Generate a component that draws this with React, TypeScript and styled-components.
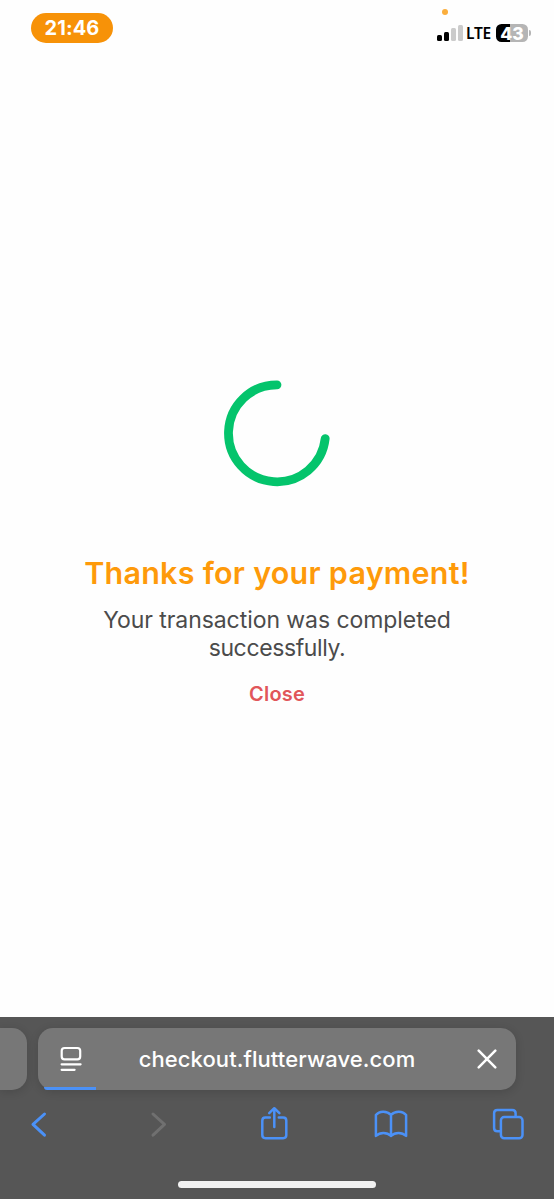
import { useState } from 'react';
import styled, { createGlobalStyle } from 'styled-components';

const BLUE = '#4b91f7';

export default function App() {
	const [closed, setClosed] = useState<boolean>(false);

	return (
		<>
			<GlobalStyle />
			<Screen>
				<StatusBar>
					<TimePill>21:46</TimePill>
					<StatusIcons>
						<MicDot />
						<Signal>
							<SignalBar $height={6} $active />
							<SignalBar $height={9} $active />
							<SignalBar $height={13} />
							<SignalBar $height={16} />
						</Signal>
						<Network>LTE</Network>
						<Battery>43</Battery>
						<BatteryTip />
					</StatusIcons>
				</StatusBar>

				<Content>
					{!closed && (
						<>
							<Spinner viewBox="0 0 108 108">
								<path d="M54 5.8A48.5 48.5 0 1 0 102.2 59.6" />
							</Spinner>
							<Title>Thanks for your payment!</Title>
							<Message>
								<span>Your transaction was completed</span>
								<br />
								<Ending>successfully.</Ending>
							</Message>
							<CloseButton
								type="button"
								onClick={() => setClosed(true)}
							>
								Close
							</CloseButton>
						</>
					)}
				</Content>

				<BrowserBar>
					<Tabs>
						<PreviousTab />
						<AddressBar>
							<PageIcon viewBox="0 0 24 28">
								<rect x="2.7" y="3" width="18.5" height="11.4" rx="2.8" />
								<path d="M2.6 19.3h19M2.6 24.8h13" />
							</PageIcon>
							<Url>checkout.flutterwave.com</Url>
							<StopIcon viewBox="0 0 20 20">
								<path d="M1.7 1.7l16.6 16.6M18.3 1.7L1.7 18.3" />
							</StopIcon>
							<Progress />
						</AddressBar>
					</Tabs>

					<Toolbar>
						<ToolIcon viewBox="0 0 36 36" $weight={3}>
							<path d="M23.5 8L12 18.4l11.5 10.8" />
						</ToolIcon>
						<ToolIcon viewBox="0 0 36 36" $weight={3} $disabled>
							<path d="M15 8l11.5 10.4L15 29.2" />
						</ToolIcon>
						<ToolIcon viewBox="0 0 36 36">
							<path d="M13.8 11.6H9.4q-3.1 0-3.1 3.1v14.4q0 3.1 3.1 3.1h17.8q3.1 0 3.1-3.1V14.7q0-3.1-3.1-3.1h-4.4M18.3 20.9V2.8M13.2 7.2l5.1-5 5.1 5" />
						</ToolIcon>
						<ToolIcon viewBox="0 0 36 36">
							<path d="M18 8.9C13.9 4.5 6.3 4.6 2.9 9.1v20.8c4.2-4 11-4 15.1 0 4.1-4 10.9-4 15.1 0V9.1C29.7 4.6 22.1 4.5 18 8.9zM18 8.9v21" />
						</ToolIcon>
						<ToolIcon viewBox="0 0 36 36">
							<path d="M10.7 25.3H7.4q-3.3 0-3.3-3.3V7.2q0-3.3 3.3-3.3h14.9q3.3 0 3.3 3.3v3.4" />
							<rect x="10.9" y="11.1" width="21.6" height="21.2" rx="3.3" />
						</ToolIcon>
					</Toolbar>

					<HomeIndicator />
				</BrowserBar>
			</Screen>
		</>
	);
}

const GlobalStyle = createGlobalStyle`
	* {
		box-sizing: border-box;
	}

	body {
		margin: 0;
		background: #fefefe;
		font-family: Inter, 'Liberation Sans', sans-serif;
	}
`;

const Screen = styled.div`
	display: flex;
	flex-direction: column;
	height: 1199px;
`;

const StatusBar = styled.header`
	display: flex;
	align-items: flex-start;
	justify-content: space-between;
	height: 60px;
	padding: 13px 23px 0 31px;
`;

const TimePill = styled.div`
	width: 82px;
	height: 30px;
	border-radius: 15px;
	background: #f79208;
	color: #fff;
	font-size: 20px;
	font-weight: 700;
	line-height: 31px;
	letter-spacing: 0.1px;
	text-align: center;
`;

const StatusIcons = styled.div`
	position: relative;
	display: flex;
	align-items: center;
	height: 18px;
	margin-top: 11px;
`;

const MicDot = styled.span`
	position: absolute;
	top: -15px;
	left: 5px;
	width: 6px;
	height: 6px;
	border-radius: 50%;
	background: #fbae3c;
`;

const Signal = styled.div`
	display: flex;
	align-items: flex-end;
	gap: 2.1px;
	height: 16px;
	margin-right: 3.5px;
`;

const SignalBar = styled.span<{ $height: number; $active?: boolean }>`
	width: 4.7px;
	height: ${({ $height }) => $height}px;
	border-radius: 1.5px;
	background: ${({ $active }) => ($active ? '#000' : '#cbcbcb')};
`;

const Network = styled.span`
	width: 25px;
	margin-right: 5px;
	color: #000;
	font-family: 'Noto Sans', 'Open Sans', sans-serif;
	font-size: 15.5px;
	font-weight: 600;
	line-height: 18px;
	letter-spacing: -0.2px;
`;

const Battery = styled.div`
	width: 32px;
	height: 18px;
	border-radius: 5.5px;
	background: linear-gradient(90deg, #000 45%, #b5b5b5 45%);
	color: #fff;
	font-size: 17.5px;
	font-weight: 800;
	line-height: 19px;
	text-align: center;
`;

const BatteryTip = styled.span`
	width: 2px;
	height: 6px;
	margin-left: 1px;
	border-radius: 0 2px 2px 0;
	background: #b5b5b5;
`;

const Content = styled.main`
	display: flex;
	flex: 1;
	flex-direction: column;
	align-items: center;
	padding-top: 319px;
	text-align: center;
`;

const Spinner = styled.svg`
	width: 108px;
	height: 108px;
	fill: none;
	stroke: #04c46c;
	stroke-width: 8.8;
	stroke-linecap: round;
`;

const Title = styled.h1`
	margin: 66px 0 0;
	color: #fe9a0a;
	font-size: 30.5px;
	font-weight: 600;
	line-height: 40px;
	letter-spacing: 0.25px;
	white-space: nowrap;
`;

const Message = styled.p`
	margin: 13px 0 0;
	color: #4b4b4b;
	font-size: 23px;
	line-height: 28px;
	letter-spacing: -0.06px;
	white-space: nowrap;
`;

const Ending = styled.span`
	letter-spacing: -0.38px;
`;

const CloseButton = styled.button`
	margin: 18px 0 0;
	padding: 0;
	border: 0;
	background: none;
	color: #e1565a;
	font-family: inherit;
	font-size: 20px;
	font-weight: 600;
	line-height: 28px;
	letter-spacing: 0.2px;
	cursor: pointer;
`;

const BrowserBar = styled.footer`
	display: flex;
	flex-direction: column;
	height: 182px;
	padding-top: 11px;
	background: #565656;
`;

const Tabs = styled.div`
	display: flex;
	gap: 11px;
	height: 62px;
`;

const PreviousTab = styled.div`
	width: 27px;
	border-radius: 0 15px 15px 0;
	background: #777;
	box-shadow: 0 2px 10px rgba(0, 0, 0, 0.14);
`;

const AddressBar = styled.div`
	position: relative;
	display: grid;
	grid-template-columns: 24px 1fr 20px;
	align-items: center;
	width: 478px;
	padding: 0 19px 0 21px;
	border-radius: 15px;
	background: #777;
	box-shadow: 0 2px 10px rgba(0, 0, 0, 0.14);
`;

const PageIcon = styled.svg`
	width: 24px;
	height: 28px;
	fill: none;
	stroke: #fff;
	stroke-width: 2.2;
	stroke-linecap: round;
`;

const Url = styled.span`
	padding-right: 6px;
	color: #fff;
	font-size: 22px;
	font-weight: 500;
	line-height: 28px;
	letter-spacing: 0.08px;
	text-align: center;
`;

const StopIcon = styled.svg`
	width: 20px;
	height: 20px;
	fill: none;
	stroke: #fff;
	stroke-width: 2.5;
	stroke-linecap: round;
`;

const Progress = styled.span`
	position: absolute;
	bottom: 0;
	left: 6px;
	width: 52px;
	height: 3px;
	border-radius: 0 0 0 8px;
	background: ${BLUE};
`;

const Toolbar = styled.nav`
	display: flex;
	justify-content: space-between;
	margin-top: 16px;
	padding: 0 28px 0 21px;
`;

const ToolIcon = styled.svg<{ $weight?: number; $disabled?: boolean }>`
	width: 36px;
	height: 36px;
	fill: none;
	stroke: ${({ $disabled }) => ($disabled ? '#707070' : BLUE)};
	stroke-width: ${({ $weight = 2.5 }) => $weight};
	stroke-linecap: round;
	stroke-linejoin: round;
`;

const HomeIndicator = styled.div`
	width: 198px;
	height: 7px;
	margin: 39px auto 0;
	border-radius: 4px;
	background: #f2f2f2;
`;
